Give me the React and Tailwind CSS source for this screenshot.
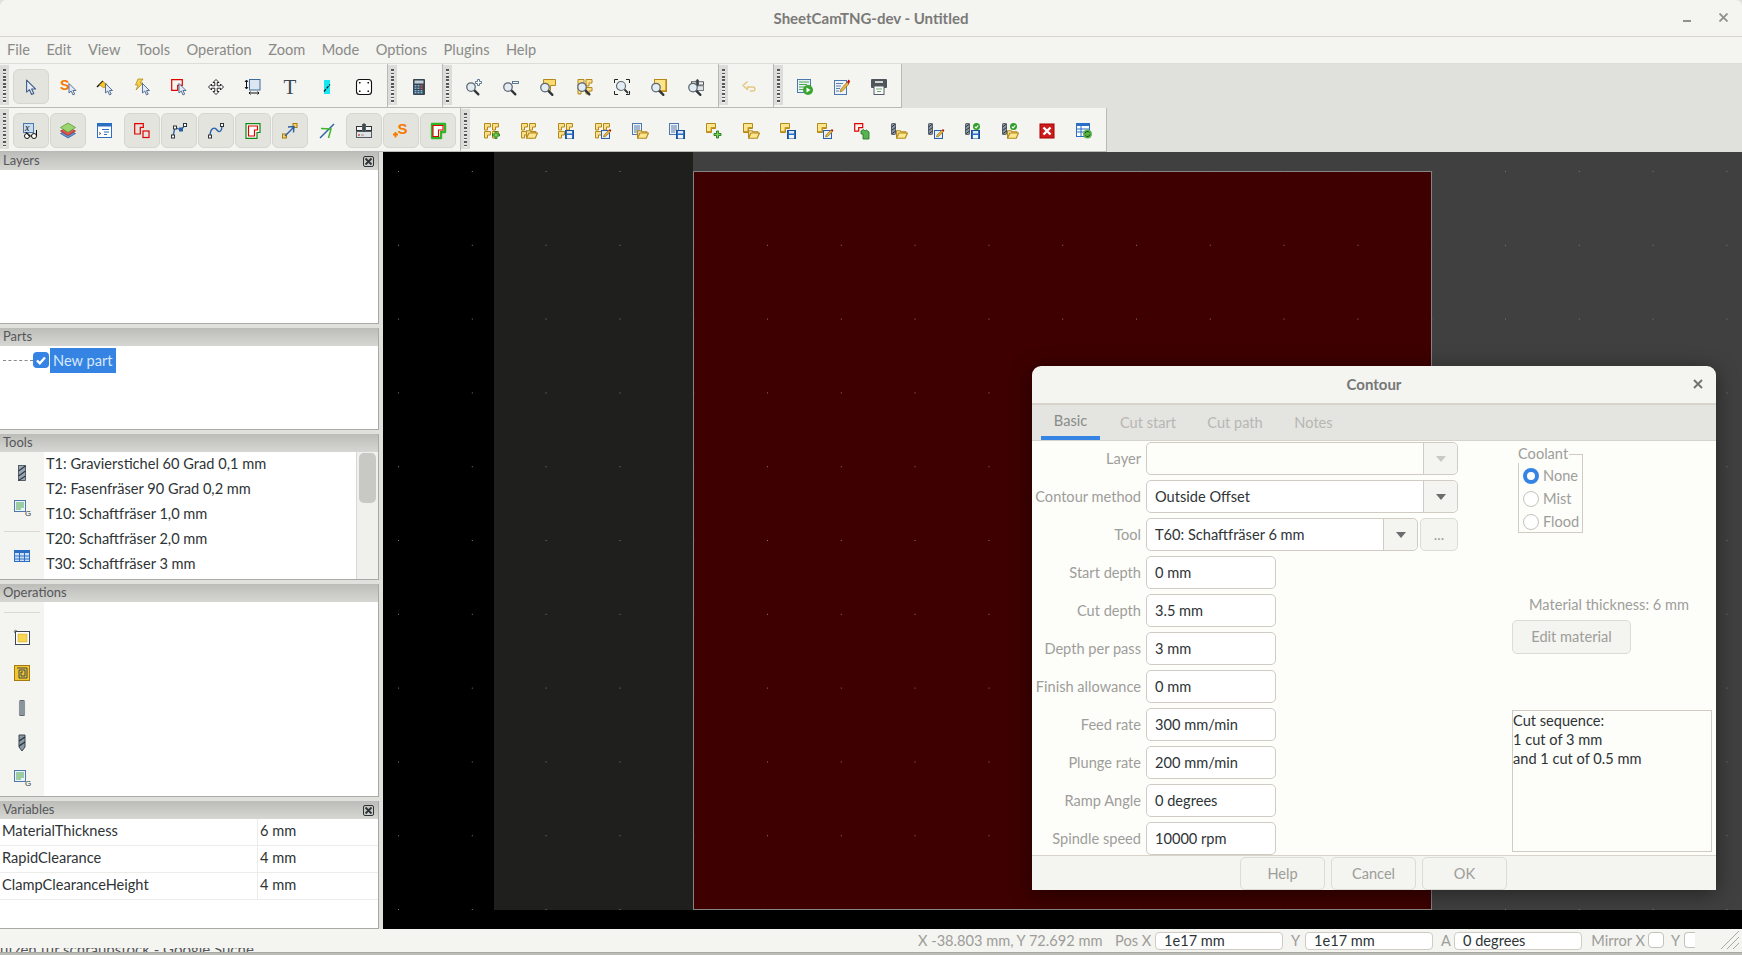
import React from "react";

const S = ({ children }) => (
  <svg width="16" height="16" viewBox="0 0 16 16" fill="none" className="block shrink-0 overflow-visible">{children}</svg>
);
const T = ({ x = 0, y = 0, s = 1, children }) => <g transform={`translate(${x} ${y}) scale(${s})`}>{children}</g>;

const Cur = ({ x = 0, y = 0, s = 1 }) => (
  <T x={x} y={y} s={s}>
    <path d="M.5.5v10l2.4-2 1.8 4 1.8-.8-1.8-3.8h3.2z" fill="#e4ebf5" stroke="#3d5a86" strokeWidth=".9" strokeLinejoin="round" />
  </T>
);
const Mag = ({ x = 0, y = 0 }) => (
  <T x={x} y={y} s={1.25}>
    <path d="M6.5 6.5l3.4 3.4" stroke="#2e3436" strokeWidth="1.8" strokeLinecap="round" />
    <circle cx="4" cy="4" r="3.4" fill="#e3ebf3" stroke="#5d6670" strokeWidth="1" />
  </T>
);
const Y4 = ({ x = 0, y = 0 }) => (
  <T x={x} y={y}>
    {[[0, 0], [8, 0], [0, 8], [8, 8]].map(([a, b], i) => (
      <path key={i} d={`M${a + .5} ${b + .5}h6v3.5h-3v3h-3z`} fill="#fbe08a" stroke="#b5881a" />
    ))}
  </T>
);
const Y1 = ({ x = 0, y = 0 }) => (
  <T x={x} y={y}>
    <path d="M.5.5h9v5h-4v4h-5z" fill="#fce690" stroke="#b5881a" />
    <path d="M1 8.5h4v-4h4" stroke="#c79a22" strokeWidth="1" />
  </T>
);
const Folder = ({ x = 0, y = 0 }) => (
  <T x={x} y={y} s={1.15}>
    <path d="M.5 8V1.5h3l1 1h4v1.5" fill="#fbe9a8" stroke="#b5881a" />
    <path d="M.5 8l2-4.5h7.5L8 8z" fill="#fce690" stroke="#b5881a" strokeLinejoin="round" />
  </T>
);
const Floppy = ({ x = 0, y = 0 }) => (
  <T x={x} y={y}>
    <rect x=".5" y=".5" width="8" height="8" fill="#2a6fc4" stroke="#1c4f96" />
    <rect x="2" y="1" width="5" height="2.5" fill="#dbe8f7" />
    <rect x="2" y="5" width="5" height="3.5" fill="#f2f6fb" />
  </T>
);
const Pencil = ({ x = 0, y = 0 }) => (
  <T x={x} y={y}>
    <rect x=".5" y="1.5" width="8" height="8" fill="#e8f0fa" stroke="#2a5fa8" />
    <path d="M2.5 8l.6-2.2L8 1l1.6 1.6-4.9 4.8z" fill="#e8b23c" stroke="#8a6a1c" strokeWidth=".6" />
    <path d="M8 1l1-1 1.4 1.4-1 1.2z" fill="#cc0000" />
  </T>
);
const Plus = ({ x = 0, y = 0 }) => (
  <T x={x} y={y}>
    <path d="M3 .5h2v2.5h2.5v2H5v2.5H3V5H.5V3H3z" fill="#7ed05a" stroke="#1d7a16" strokeWidth=".9" />
  </T>
);
const Doc = ({ x = 0, y = 0 }) => (
  <T x={x} y={y}>
    <rect x=".5" y=".5" width="9" height="11" fill="#eef3fa" stroke="#4d78ad" />
    <path d="M2 3h6M2 5h6M2 7h6M2 9h4" stroke="#5b7fa8" />
  </T>
);
const Bit = ({ x = 0, y = 0 }) => (
  <T x={x} y={y}>
    <rect x=".5" y=".5" width="4" height="11" rx=".8" fill="#8b97a3" stroke="#3c4650" strokeWidth=".8" />
    <path d="M.5 4L4.500 1M.5 7.500L4.500 4.500M.5 11L4.500 8" stroke="#2e3842" />
  </T>
);
const Check = ({ x = 0, y = 0 }) => (
  <T x={x} y={y}>
    <circle cx="3.5" cy="3.5" r="3.5" fill="#2f9e28" />
    <path d="M1.8 3.6l1.3 1.3 2.2-2.6" stroke="#fff" strokeWidth="1.1" />
  </T>
);
const Machine = ({ x = 0, y = 0, s = 1 }) => (
  <T x={x} y={y} s={s}>
    <rect x=".5" y="3.5" width="15" height="4" fill="#f4f4f0" stroke="#2e3436" />
    <rect x=".5" y="8.5" width="15" height="6" fill="#dfe3e6" stroke="#555d66" />
    <rect x="6" y="1" width="4" height="7" fill="#555d66" />
    <path d="M8 0v9" stroke="#2e3436" />
    <path d="M2 12h2" stroke="#cc0000" />
    <path d="M5 12h3" stroke="#8a9299" />
  </T>
);
const Node = ({ x, y, f = "#fff", st = "#2e3436" }) => <rect x={x - 1.5} y={y - 1.5} width="3" height="3" fill={f} stroke={st} strokeWidth="1" />;

const i = {
  select: <S><Cur x={3} y={.5} s={1.2} /></S>,
  sel: (
    <S>
      <text x="0" y="11" fontFamily="Liberation Sans" fontWeight="700" fontSize="14" fill="#f57900">S</text>
      <Cur x={8.5} y={4} s={.95} />
    </S>
  ),
  selLine: (
    <S>
      <path d="M0 8L6 2" stroke="#111" strokeWidth="1.4" />
      <path d="M2.5 6L6 2.5l4 3L7 9z" fill="#f9c91c" stroke="#a77a10" strokeWidth=".6" />
      <Cur x={8} y={4} s={.95} />
    </S>
  ),
  selBolt: (
    <S>
      <path d="M4 0h5L6 4h3L2 11l2.2-5H1.5z" fill="#f4d34c" stroke="#b08a22" strokeWidth=".8" />
      <Cur x={8} y={4} s={.95} />
    </S>
  ),
  selShape: (
    <S>
      <path d="M.7.7h10.6v5.6H6.7v5H.7z" stroke="#e00000" strokeWidth="1.2" />
      <Cur x={7.5} y={4} s={.95} />
    </S>
  ),
  move: (
    <S>
      <path d="M8 .5l3 3H9.2v3.3h3.3V5l3 3-3 3V9.2H9.2v3.3H11l-3 3-3-3h1.8V9.2H3.5V11l-3-3 3-3v1.8h3.3V3.5H5z" fill="#fff" stroke="#111" strokeWidth=".9" strokeLinejoin="round" />
    </S>
  ),
  scale: (
    <S>
      <rect x="4.5" y=".5" width="10.5" height="10.5" fill="#dbe6f1" stroke="#3f6c9e" />
      <path d="M1.5 1.5v8M0 3l1.5-2L3 3M0 8l1.5 2L3 8" stroke="#111" />
      <path d="M4 14h10M5.500 12.500L4 14l1.500 1.500M12.500 12.500L14 14l-1.500 1.500" stroke="#111" />
    </S>
  ),
  text: (
    <S>
      <text x="8" y="14.500" textAnchor="middle" fontFamily="Liberation Serif" fontSize="21" fill="#3c4650">T</text>
    </S>
  ),
  cut: (
    <S>
      <rect x="5" y="1" width="6" height="14" fill="#16e6f2" />
      <path d="M5 12.500L11 5.500" stroke="#111" strokeDasharray="3 1" strokeWidth="1.200" />
    </S>
  ),
  corners: (
    <S>
      <rect x=".5" y=".5" width="15" height="15" rx="3" fill="#fff" stroke="#111" strokeWidth="1.100" />
      <path d="M3 3h1.500v1.500H3zM11.500 3H13v1.500h-1.500zM3 11.500h1.500V13H3zM11.500 11.500H13V13h-1.500z" fill="#111" />
    </S>
  ),
  calc: (
    <S>
      <rect x="2" y="0" width="12" height="16" rx="1" fill="#37454f" />
      <rect x="3.500" y="1.500" width="9" height="3" fill="#c3d0d8" />
      {[6, 8.500, 11, 13].map((y, a) =>
        [3.500, 6.500, 9.500].map((x, b) => <rect key={`${a}${b}`} x={x} y={y} width="2" height="1.500" fill={b === 2 && a < 2 ? "#d9534f" : "#7fb1dc"} />)
      )}
    </S>
  ),
  zoomIn: (
    <S>
      <Mag x={0} y={3} />
      <path d="M11.500.5h2v2h2v2h-2v2h-2v-2h-2v-2h2z" fill="#fff" stroke="#4d6a8a" strokeWidth=".9" />
    </S>
  ),
  zoomOut: (
    <S>
      <Mag x={0} y={3} />
      <rect x="9.500" y="2.500" width="6" height="2" fill="#fff" stroke="#4d6a8a" strokeWidth=".9" />
    </S>
  ),
  zoomSel: (
    <S>
      <path d="M3.500.5h12v6h-5v5h-4v-5h-3z" fill="#fbdb6e" stroke="#b5881a" />
      <Mag x={0} y={3.500} />
    </S>
  ),
  zoomAll: (
    <S>
      <Y4 x={.5} y={0} />
      <Mag x={0} y={3} />
    </S>
  ),
  zoomFit: (
    <S>
      <path d="M.5 4V.5H4M12 .5h3.500V4M.5 12v3.500H4M15.500 12v3.500H12" stroke="#222" />
      <circle cx="7" cy="7" r="4.500" fill="#e3ebf3" stroke="#5d6670" strokeWidth="1.100" />
      <path d="M10.500 10.500l3.500 3.500" stroke="#2e3436" strokeWidth="1.800" />
    </S>
  ),
  zoomY: (
    <S>
      <rect x="3.500" y=".5" width="12" height="12" fill="#fde68a" stroke="#b5881a" />
      <path d="M15 1v11H5" stroke="#c08e14" strokeWidth="1.400" />
      <Mag x={0} y={3.500} />
    </S>
  ),
  zoomM: (
    <S>
      <Machine x={3} y={0} s={.8} />
      <Mag x={0} y={3.500} />
    </S>
  ),
  undo: (
    <S>
      <path d="M5.500 2.500L1 6.500l4.500 4V8H11c2.500 0 2.500 4 0 4H8" stroke="#e3c780" strokeWidth="1.400" strokeLinejoin="round" />
    </S>
  ),
  run: (
    <S>
      <rect x=".5" y=".5" width="13" height="13" fill="#e8f0fa" stroke="#4d78ad" />
      <path d="M2 3h10M2 5.500h8M2 8h6M2 10.500h5" stroke="#4fa84a" />
      <circle cx="11" cy="11" r="5" fill="#39a52e" />
      <path d="M9.500 8.500v5l4-2.500z" fill="#fff" />
    </S>
  ),
  edit: (
    <S>
      <rect x=".5" y="1.500" width="12" height="14" fill="#eef3fa" stroke="#4d78ad" />
      <path d="M2 4.500h7M2 7h5M2 9.500h4M2 12h3" stroke="#5b7fa8" />
      <path d="M6 13l.8-2.800L13 3l2 2-6.500 7z" fill="#e8b23c" stroke="#8a6a1c" strokeWidth=".6" />
      <path d="M13 3l1.500-2.500L16 2l-1 3z" fill="#cc0000" />
    </S>
  ),
  print: (
    <S>
      <rect x="0" y="0" width="16" height="9" rx="1" fill="#4e565c" />
      <rect x="4" y="2" width="8" height="2" fill="#d3d7cf" />
      <rect x="3" y="7" width="10" height="8.500" fill="#fafafa" stroke="#555d66" />
      <path d="M5 10h6M6 12.500h4" stroke="#6ba86a" />
    </S>
  ),
  glasses: (
    <S>
      <rect x=".5" y="0.500" width="10" height="9" fill="#c9dbee" stroke="#4d78ad" />
      <text x="2" y="8" fontFamily="Liberation Serif" fontStyle="italic" fontSize="10" fill="#111">x</text>
      <circle cx="4" cy="13" r="2.500" fill="#fff" stroke="#111" />
      <circle cx="11" cy="13" r="2.500" fill="#fff" stroke="#111" />
      <path d="M6.500 13h2M13.500 13V7M3 9l3 4" stroke="#111" />
    </S>
  ),
  layers: (
    <S>
      <path d="M8 7l7.500 3.500L8 15 .5 10.500z" fill="#5f93d6" stroke="#2c5a9c" strokeWidth=".7" />
      <path d="M8 4.500L15.500 8 8 12.500.5 8z" fill="#e5544b" stroke="#a32018" strokeWidth=".7" />
      <path d="M8 0l7.500 4.500L8 9.500.5 4.500z" fill="#9ad56f" stroke="#4e8f2c" strokeWidth=".7" />
    </S>
  ),
  window: (
    <S>
      <rect x=".5" y=".5" width="14" height="14" fill="#fff" stroke="#2a6fc4" />
      <rect x="1" y="1" width="13" height="2.500" fill="#2a6fc4" />
      <path d="M5 6.500h7M7 9h5M7 11.500h3" stroke="#2a6fc4" />
      <path d="M2 9.500l2 1-2 1" stroke="#3c4650" strokeWidth=".8" />
    </S>
  ),
  twoShapes: (
    <S>
      <path d="M.7.7h8.600v3.600h-3V11H.7z" stroke="#e00000" strokeWidth="1.200" />
      <rect x="9" y="8" width="6" height="6.500" stroke="#e00000" strokeWidth="1.200" />
    </S>
  ),
  nodes: (
    <S>
      <path d="M2 13L4 4.500 10 7l4-5" stroke="#2a5fa8" strokeWidth="1.300" />
      <Node x={2} y={13.500} />
      <Node x={4} y={4.500} />
      <Node x={14} y={2} />
      <Node x={10} y={6.500} f="#2a5fa8" st="#2a5fa8" />
    </S>
  ),
  curve: (
    <S>
      <path d="M2 13.500C2 4 7 4 9 7s5 2 5-5" stroke="#2a5fa8" strokeWidth="1.400" />
      <Node x={2} y={13.500} />
      <Node x={14} y={2} />
    </S>
  ),
  inner: (
    <S>
      <path d="M1 .7h14v8.800h-3v5.800H1z" fill="#fff" stroke="#0a8a18" strokeWidth="1.200" />
      <path d="M3.500 3h9v4H9.500v6h-6z" stroke="#e00000" strokeWidth="1.200" />
    </S>
  ),
  lead: (
    <S>
      <rect x="11" y=".5" width="4" height="4" fill="#fcd65f" stroke="#a77a10" />
      <rect x=".5" y="11" width="4" height="4" fill="#fcd65f" stroke="#a77a10" />
      <path d="M3 13L12 4M6 4l6-.5-.5 6" stroke="#2a5fa8" strokeWidth="1.400" />
    </S>
  ),
  arrowG: (
    <S>
      <path d="M1 15L15 1" stroke="#2a5fa8" strokeWidth="1.500" />
      <path d="M2 5.500l10 .5-2.500 9" stroke="#43b62e" strokeWidth="1.500" />
    </S>
  ),
  mach: <S><Machine /></S>,
  plusS: (
    <S>
      <path d="M0 11.500h5M2.500 9v5.500" stroke="#f57900" strokeWidth="1.800" />
      <text x="4.500" y="11" fontFamily="Liberation Sans" fontWeight="700" fontSize="15" fill="#f57900">S</text>
    </S>
  ),
  thick: (
    <S>
      <path d="M2 1h13v8h-4v6H2z" fill="#fff" stroke="#2fb52a" strokeWidth="2.400" strokeLinejoin="round" />
      <path d="M3 2.500h10v4.500H8.500v6.500H3z" fill="#fff" stroke="#e00000" strokeWidth="1.100" />
    </S>
  ),
  y4plus: <S><Y4 /><Plus x={8} y={8} /></S>,
  y4folder: <S><Y4 /><Folder x={5} y={6} /></S>,
  y4save: <S><Y4 /><Floppy x={7} y={7} /></S>,
  y4edit: <S><Y4 /><Pencil x={6} y={6} /></S>,
  docFolder: <S><Doc /><Folder x={5} y={6} /></S>,
  docSave: <S><Doc /><Floppy x={7} y={7} /></S>,
  yPlus: <S><Y1 /><Plus x={7.500} y={7.500} /></S>,
  yFolder: <S><Y1 /><Folder x={5} y={6} /></S>,
  ySave: <S><Y1 /><Floppy x={7} y={7} /></S>,
  yEdit: <S><Y1 /><Pencil x={6} y={6} /></S>,
  shapeShirt: (
    <S>
      <path d="M.7.7h8v4H4.700v3.500h-4z" stroke="#e00000" strokeWidth="1.200" />
      <path d="M7 8l2.500-1.500 1.500 1.500 1.500-1 2.500 2v7H9v-5H7z" fill="#58b352" stroke="#1f6f1a" strokeWidth=".8" />
    </S>
  ),
  bitFolder: <S><Bit /><Folder x={5} y={6} /></S>,
  bitEdit: <S><Bit /><Pencil x={6} y={6} /></S>,
  bitSave: <S><Bit /><Floppy x={6} y={7} /><Check x={8} y={0} /></S>,
  bitFolderCheck: <S><Bit /><Folder x={5} y={6} /><Check x={8} y={0} /></S>,
  del: (
    <S>
      <rect x="1" y="1" width="14" height="14" fill="#cc1c1c" stroke="#a40000" />
      <path d="M4.500 4.500l7 7M11.500 4.500l-7 7" stroke="#fff" strokeWidth="2.400" />
    </S>
  ),
  tableRefresh: (
    <S>
      <rect x=".5" y=".5" width="13" height="13" fill="#fff" stroke="#2a6fc4" />
      <rect x="1" y="1" width="12" height="2" fill="#2a6fc4" />
      <path d="M1 6h12M1 9h12M5 3v10" stroke="#2a6fc4" />
      <circle cx="11.500" cy="11" r="4.500" fill="#57b148" />
      <path d="M9 10.500a2.500 2.500 0 014.500-1M14 11.500a2.500 2.500 0 01-4.500 1" stroke="#174f13" />
    </S>
  ),
  table: (
    <S>
      <rect x=".5" y="2.500" width="15" height="11" fill="#cfe0f3" stroke="#2a6fc4" />
      <rect x="1" y="3" width="14" height="2" fill="#2a6fc4" />
      <path d="M1 8h14M1 11h14M5.500 5v8M10.500 5v8" stroke="#2a6fc4" />
    </S>
  ),
  tool: (
    <S>
      <rect x="4.500" y=".5" width="7" height="15" fill="#9aa6b2" stroke="#3c4650" strokeWidth=".8" />
      <path d="M4.500 6L11.500 1M4.500 11L11.500 6M4.500 15.500L11.500 11" stroke="#2e3842" strokeWidth="1.200" />
    </S>
  ),
  gcode: (
    <S>
      <rect x=".5" y=".5" width="11" height="11" fill="#eaf2fa" stroke="#4d78ad" />
      <path d="M2 3h8M2 5h8M2 7h8M2 9h5" stroke="#4fa84a" />
      <text x="11" y="15.500" fontFamily="Liberation Sans" fontSize="8" fill="#2e3436">G</text>
    </S>
  ),
  opProfile: (
    <S>
      <circle cx="1.500" cy="1.500" r="1.300" fill="#fff" stroke="#555" strokeWidth=".7" />
      <rect x="1.500" y="1.500" width="14" height="13" fill="#fff" stroke="#3c4650" />
      <rect x="4" y="4" width="9" height="8" fill="#f8d650" stroke="#c79a22" strokeWidth=".5" />
    </S>
  ),
  opPocket: (
    <S>
      <rect x=".5" y=".5" width="15" height="15" fill="#f2c62f" stroke="#a77a10" />
      <path d="M3 3h10v10H5V5h6v6H7V7h2" stroke="#3c4650" strokeWidth="1" />
    </S>
  ),
  opThread: (
    <S>
      <rect x="5" y="0" width="6" height="16" rx="1.500" fill="#5a6670" />
      <path d="M4.500 2h7M4.500 4h7M4.500 6h7M4.500 8h7M4.500 10h7M4.500 12h7M4.500 14h7" stroke="#d8dde0" strokeWidth=".8" />
    </S>
  ),
  opDrill: (
    <S>
      <path d="M5 0h6v12l-3 4-3-4z" fill="#8b97a3" stroke="#3c4650" strokeWidth="1" />
      <path d="M5 6l6-4M5 11l6-4" stroke="#24303a" strokeWidth="1.200" />
    </S>
  ),
};

const Grip = () => (
  <div className="w-[9px] shrink-0 bg-[#dcdcd8] mt-[1px] mb-[2px] pl-[3px] pt-[4px] pb-[1px]">
    <div className="w-[3px] h-full bg-[repeating-linear-gradient(to_bottom,#55575a_0,#55575a_1.500px,#f6f6f6_1.500px,transparent_3.500px)]" />
  </div>
);

const Btn = ({ icon, on }) => (
  <div className={`w-[36px] h-[35px] flex items-center justify-center rounded-[6px] border shrink-0 ${on ? "bg-[#e4e4df] border-[#d6d6d0]" : "border-transparent"}`}>
    {icon}
  </div>
);

const Group = ({ items, pr }) => (
  <div className="flex shrink-0 border-r border-[#b9b9b5]">
    <Grip />
    <div className="flex gap-[1px] pl-[4px] pt-[5px]" style={{ paddingRight: pr }}>
      {items.map(([k, on], n) => <Btn key={n} icon={i[k]} on={on} />)}
    </div>
  </div>
);

const Bar = ({ children }) => (
  <div className="h-[44px] flex">
    <div className="flex bg-[#f4f4f0] border-b border-[#b9b9b5]">{children}</div>
  </div>
);

const Header = ({ title, close }) => (
  <div className="h-[18px] shrink-0 flex items-center justify-between pl-[3px] pr-[4px] bg-[linear-gradient(to_bottom,#bcbcb8,#d6d6d2)] text-[13px] text-[#55575a]">
    <span>{title}</span>
    {close && (
      <span className="w-[11px] h-[11px] border border-[#2e3436] rounded-[2px] flex items-center justify-center">
        <svg width="9" height="9" viewBox="0 0 9 9"><path d="M1.500 1.500l6 6M7.500 1.500l-6 6" stroke="#2e3436" strokeWidth="1.800" /></svg>
      </span>
    )}
  </div>
);

const Panel = ({ title, close, h, children }) => (
  <div className="w-[379px] shrink-0 flex flex-col border-r border-b border-[#a9a9a5] bg-white" style={{ height: h }}>
    <Header title={title} close={close} />
    <div className="flex-1 min-h-0 flex">{children}</div>
  </div>
);

const Side = ({ children }) => <div className="w-[44px] shrink-0 bg-[#f4f4f0] flex flex-col items-center">{children}</div>;

const tools = ["T1: Gravierstichel 60 Grad 0,1 mm", "T2: Fasenfräser 90 Grad 0,2 mm", "T10: Schaftfräser 1,0 mm", "T20: Schaftfräser 2,0 mm", "T30: Schaftfräser 3 mm"];
const vars = [["MaterialThickness", "6 mm"], ["RapidClearance", "4 mm"], ["ClampClearanceHeight", "4 mm"]];

const Left = () => (
  <div className="w-[383px] shrink-0 flex flex-col gap-[4px] bg-[#e0e0dc] text-[14.600px] text-[#2e3436]">
    <Panel title="Layers" close h={172}><div /></Panel>
    <Panel title="Parts" h={102}>
      <div className="flex items-start pt-[2px] pl-[3px]">
        <div className="w-[30px] mt-[12px] border-t border-dashed border-[#888]" />
        <div className="w-[16px] h-[16px] mt-[4px] rounded-[4px] bg-[#3584e4] flex items-center justify-center">
          <svg width="12" height="12" viewBox="0 0 12 12"><path d="M2 6.500l2.800 2.800L10 3.500" stroke="#fff" strokeWidth="2.400" fill="none" /></svg>
        </div>
        <div className="ml-[1px] w-[66px] h-[25px] bg-[#3584e4] text-[#d8e8fb] pl-[3px] leading-[25px] whitespace-nowrap">New part</div>
      </div>
    </Panel>
    <Panel title="Tools" h={146}>
      <Side>
        <div className="mt-[13px]">{i.tool}</div>
        <div className="mt-[19px]">{i.gcode}</div>
        <div className="mt-[15px] w-[36px] border-t border-[#d8d8d4]" />
        <div className="mt-[16px]">{i.table}</div>
      </Side>
      <div className="flex-1 pl-[2px]">
        {tools.map((t) => <div key={t} className="h-[25px] leading-[23px] whitespace-nowrap">{t}</div>)}
      </div>
      <div className="w-[22px] shrink-0 bg-[#f0f0ec] border-l border-[#d8d8d4] pl-[2px] pr-[2px] pt-[1px]">
        <div className="h-[50px] rounded-[5px] bg-[#c8c8c5]" />
      </div>
    </Panel>
    <Panel title="Operations" h={213}>
      <Side>
        <div className="mt-[10px] w-[36px] border-t border-[#d8d8d4]" />
        <div className="mt-[17px]">{i.opProfile}</div>
        <div className="mt-[19px]">{i.opPocket}</div>
        <div className="mt-[19px]">{i.opThread}</div>
        <div className="mt-[19px]">{i.opDrill}</div>
        <div className="mt-[19px]">{i.gcode}</div>
      </Side>
      <div className="flex-1" />
    </Panel>
    <Panel title="Variables" close h={128}>
      <div className="w-full">
        {vars.map(([a, b]) => (
          <div key={a} className="h-[27px] flex border-b border-[#ecece8] leading-[24px] whitespace-nowrap">
            <div className="w-[258px] pl-[2px] border-r border-[#ecece8]">{a}</div>
            <div className="pl-[2px]">{b}</div>
          </div>
        ))}
      </div>
    </Panel>
  </div>
);

const labelC = "text-[#9d9d9a]";

const Field = ({ v }) => (
  <div className="w-[130px] h-[33px] rounded-[5px] border border-[#d0ccc4] bg-white pl-[8px] leading-[31px] text-[#2e3436] whitespace-nowrap">{v}</div>
);
const Combo = ({ v, w, off }) => (
  <div className={`h-[33px] rounded-[5px] border border-[#d0ccc4] flex ${off ? "bg-[#fdfdfa]" : "bg-white"}`} style={{ width: w }}>
    <div className="flex-1 pl-[8px] leading-[31px] text-[#2e3436] whitespace-nowrap">{v}</div>
    <div className="w-[34px] border-l border-[#d0ccc4] bg-[#f4f4f0] rounded-r-[5px] flex items-center justify-center">
      <div className={`w-0 h-0 border-x-[5.500px] border-x-transparent border-t-[6px] ${off ? "border-t-[#c8c8c4]" : "border-t-[#6a6c6e]"}`} />
    </div>
  </div>
);
const Row = ({ l, children }) => (
  <div className="flex h-[33px] items-center">
    <div className={`w-[109px] shrink-0 whitespace-nowrap ${labelC} flex justify-end`}>{l}</div>
    <div className="ml-[5px] flex gap-[2px]">{children}</div>
  </div>
);
const Radio = ({ l, on }) => (
  <div className="h-[23px] flex items-center">
    <div className={`w-[16px] h-[16px] rounded-full ml-[4px] bg-white ${on ? "border-[4px] border-[#3584e4]" : "border border-[#c4c2bc]"}`} />
    <span className={`ml-[4px] ${labelC}`}>{l}</span>
  </div>
);
const DBtn = ({ t, w = 85 }) => (
  <div className={`h-[33px] rounded-[5px] border border-[#dcdcd6] bg-[#f4f4f0] flex items-center justify-center ${labelC}`} style={{ width: w }}>{t}</div>
);

const Dialog = () => (
  <div className="absolute left-[649px] top-[214px] w-[684px] h-[524px] rounded-t-[9px] bg-[#f4f4f0] flex flex-col shadow-[0_4px_22px_rgba(0,0,0,0.45)] text-[14.600px]">
    <div className="h-[37px] shrink-0 relative flex items-center justify-center font-bold text-[#767776] text-[15px]">
      Contour
      <svg className="absolute right-[13px] top-[13px]" width="10" height="10" viewBox="0 0 10 10"><path d="M1 1l8 8M9 1l-8 8" stroke="#70726f" strokeWidth="1.800" /></svg>
    </div>
    <div className="h-[38px] shrink-0 bg-[#e4e4e0] border-t-2 border-[#d8d4cc] border-b border-b-[#d5d3cc] flex pl-[9px]">
      <div className="w-[59px] h-full border-b-[4px] border-[#3584e4] flex items-center justify-center text-[#8a8a88]">Basic</div>
      <div className="ml-[20px] w-[56px] flex items-center justify-center whitespace-nowrap text-[#b7b7b3]">Cut start</div>
      <div className="ml-[32px] w-[54px] flex items-center justify-center whitespace-nowrap text-[#b7b7b3]">Cut path</div>
      <div className="ml-[32px] w-[39px] flex items-center justify-center text-[#b7b7b3]">Notes</div>
    </div>
    <div className="flex-1 min-h-0 bg-[#fdfdfa] flex">
      <div className="w-[480px] shrink-0 flex flex-col gap-[5px] pt-[1px]">
        <Row l="Layer"><Combo w={312} off /></Row>
        <Row l="Contour method"><Combo v="Outside Offset" w={312} /></Row>
        <Row l="Tool">
          <Combo v="T60: Schaftfräser 6 mm" w={272} />
          <div className="w-[38px] h-[33px] rounded-[5px] border border-[#dcdcd6] bg-[#f4f4f0] text-center leading-[31px] text-[#9d9d9a]">...</div>
        </Row>
        <Row l="Start depth"><Field v="0 mm" /></Row>
        <Row l="Cut depth"><Field v="3.5 mm" /></Row>
        <Row l="Depth per pass"><Field v="3 mm" /></Row>
        <Row l="Finish allowance"><Field v="0 mm" /></Row>
        <Row l="Feed rate"><Field v="300 mm/min" /></Row>
        <Row l="Plunge rate"><Field v="200 mm/min" /></Row>
        <Row l="Ramp Angle"><Field v="0 degrees" /></Row>
        <Row l="Spindle speed"><Field v="10000 rpm" /></Row>
      </div>
      <div className="flex flex-col">
        <div className="relative ml-[6px] mt-[13px] w-[65px] h-[79px] border border-[#d0ccc4] pt-[9px]">
          <span className={`absolute left-[-1px] top-[-10px] bg-[#fdfdfa] pr-[1px] leading-[18px] ${labelC}`}>Coolant</span>
          <Radio l="None" on />
          <Radio l="Mist" />
          <Radio l="Flood" />
        </div>
        <div className={`mt-[62px] ml-[17px] h-[20px] leading-[20px] whitespace-nowrap ${labelC}`}>Material thickness: 6 mm</div>
        <div className={`mt-[5px] w-[119px] h-[34px] rounded-[5px] border border-[#dcdcd6] bg-[#f4f4f0] flex items-center justify-center ${labelC}`}>Edit material</div>
        <div className="mt-[56px] w-[200px] h-[142px] border border-[#d0ccc4] leading-[19px] text-[#2e3436] whitespace-nowrap">
          Cut sequence:<br />1 cut of 3 mm<br />and 1 cut of 0.5 mm
        </div>
      </div>
    </div>
    <div className="h-[35px] shrink-0 border-t border-[#d8d4cc] flex gap-[6px] pl-[208px] pt-[1px]">
      <DBtn t="Help" />
      <DBtn t="Cancel" />
      <DBtn t="OK" />
    </div>
  </div>
);

const Canvas = () => (
  <div className="flex-1 relative bg-black flex flex-col">
    <div className="h-[758px] flex shrink-0">
      <div className="w-[111px] bg-black" />
      <div className="w-[199px] bg-[#1f1f1e]" />
      <div className="flex-1 bg-[#404040] pt-[19px]">
        <div className="w-[739px] h-full bg-[#3e0000] border border-[#858585]" />
      </div>
    </div>
    <svg className="absolute left-0 top-0 w-full h-[758px]">
      <defs>
        <pattern id="grid" x="15" y="19" width="73.8" height="73.8" patternUnits="userSpaceOnUse">
          <rect width="1" height="1" fill="#7a7a7a" />
        </pattern>
      </defs>
      <rect width="100%" height="100%" fill="url(#grid)" />
    </svg>
    <Dialog />
  </div>
);

const StatusInput = ({ v }) => (
  <div className="w-[128px] h-[18px] rounded-[4px] border border-[#d0ccc4] bg-white pl-[8px] leading-[16px] text-[#2e3436] whitespace-nowrap">{v}</div>
);

const Status = () => (
  <>
    <div className="h-[23px] shrink-0 relative bg-[#f4f4f0] flex pl-[918px] pt-[3px] text-[14.600px] leading-[18px] text-[#9d9d9a] whitespace-nowrap">
      <div className="w-[197px]">X -38.803 mm, Y 72.692 mm</div>
      <div className="w-[40px]">Pos X</div>
      <StatusInput v="1e17 mm" />
      <div className="w-[22px] text-right pr-[5px]">Y</div>
      <StatusInput v="1e17 mm" />
      <div className="w-[21px] text-right pr-[3px]">A</div>
      <StatusInput v="0 degrees" />
      <div className="w-[66px] text-right pr-[3px]">Mirror X</div>
      <div className="w-[16px] h-[16px] rounded-[4px] border border-[#c4c2bc] bg-white" />
      <div className="w-[20px] text-right pr-[4px]">Y</div>
      <div className="w-[11px] h-[16px] rounded-l-[4px] border border-r-0 border-[#c4c2bc] bg-white" />
      <svg className="absolute right-[2px] bottom-[2px]" width="20" height="20" viewBox="0 0 20 20">
        <path d="M1 19L19 1M7 19L19 7M13 19l6-6" stroke="#a9a9a5" />
      </svg>
      <div className="absolute left-0 bottom-0 h-[4px] overflow-hidden leading-[3px] text-[15px] text-[#55575a]">utzen für schraubstock - Google Suche</div>
    </div>
    <div className="h-[3px] shrink-0 bg-[#bcbcb6] border-t border-[#a9a9a3]" />
  </>
);

const menu = ["File", "Edit", "View", "Tools", "Operation", "Zoom", "Mode", "Options", "Plugins", "Help"];

export default function App() {
  return (
    <div className="w-[1742px] h-[955px] overflow-hidden flex flex-col bg-[#e0e0dc] font-['Lato',sans-serif]">
      <div className="h-[37px] shrink-0 relative rounded-t-[6px] bg-[#f4f4f0] border-b border-[#d8d4cc] flex items-center justify-center font-bold text-[15px] text-[#7a7a78]">
        SheetCamTNG-dev - Untitled
        <div className="absolute left-[1683px] top-[20px] w-[8px] h-[2px] bg-[#8f8f8c]" />
        <svg className="absolute left-[1719px] top-[13px]" width="9" height="9" viewBox="0 0 9 9"><path d="M.5.5l8 8M8.500.5l-8 8" stroke="#8f8f8c" strokeWidth="1.800" /></svg>
      </div>
      <div className="h-[27px] shrink-0 bg-[#f4f4f0] border-b border-[#dcdcd8] flex items-center pl-[7px] gap-[16.500px] text-[14.600px] text-[#8a8a88]">
        {menu.map((m) => <span key={m}>{m}</span>)}
      </div>
      <Bar>
        <Group pr="5px" items={[["select", 1], ["sel"], ["selLine"], ["selBolt"], ["selShape"], ["move"], ["scale"], ["text"], ["cut"], ["corners"]]} />
        <Group pr="5px" items={[["calc"]]} />
        <Group pr="4px" items={[["zoomIn"], ["zoomOut"], ["zoomSel"], ["zoomAll"], ["zoomFit"], ["zoomY"], ["zoomM"]]} />
        <Group pr="5px" items={[["undo"]]} />
        <Group pr="4px" items={[["run"], ["edit"], ["print"]]} />
      </Bar>
      <Bar>
        <Group pr="4px" items={[["glasses", 1], ["layers", 1], ["window"], ["twoShapes", 1], ["nodes", 1], ["curve", 1], ["inner", 1], ["lead", 1], ["arrowG"], ["mach", 1], ["plusS", 1], ["thick", 1]]} />
        <Group pr="4px" items={[["y4plus"], ["y4folder"], ["y4save"], ["y4edit"], ["docFolder"], ["docSave"], ["yPlus"], ["yFolder"], ["ySave"], ["yEdit"], ["shapeShirt"], ["bitFolder"], ["bitEdit"], ["bitSave"], ["bitFolderCheck"], ["del"], ["tableRefresh"]]} />
      </Bar>
      <div className="flex-1 min-h-0 flex">
        <Left />
        <Canvas />
      </div>
      <Status />
    </div>
  );
}
